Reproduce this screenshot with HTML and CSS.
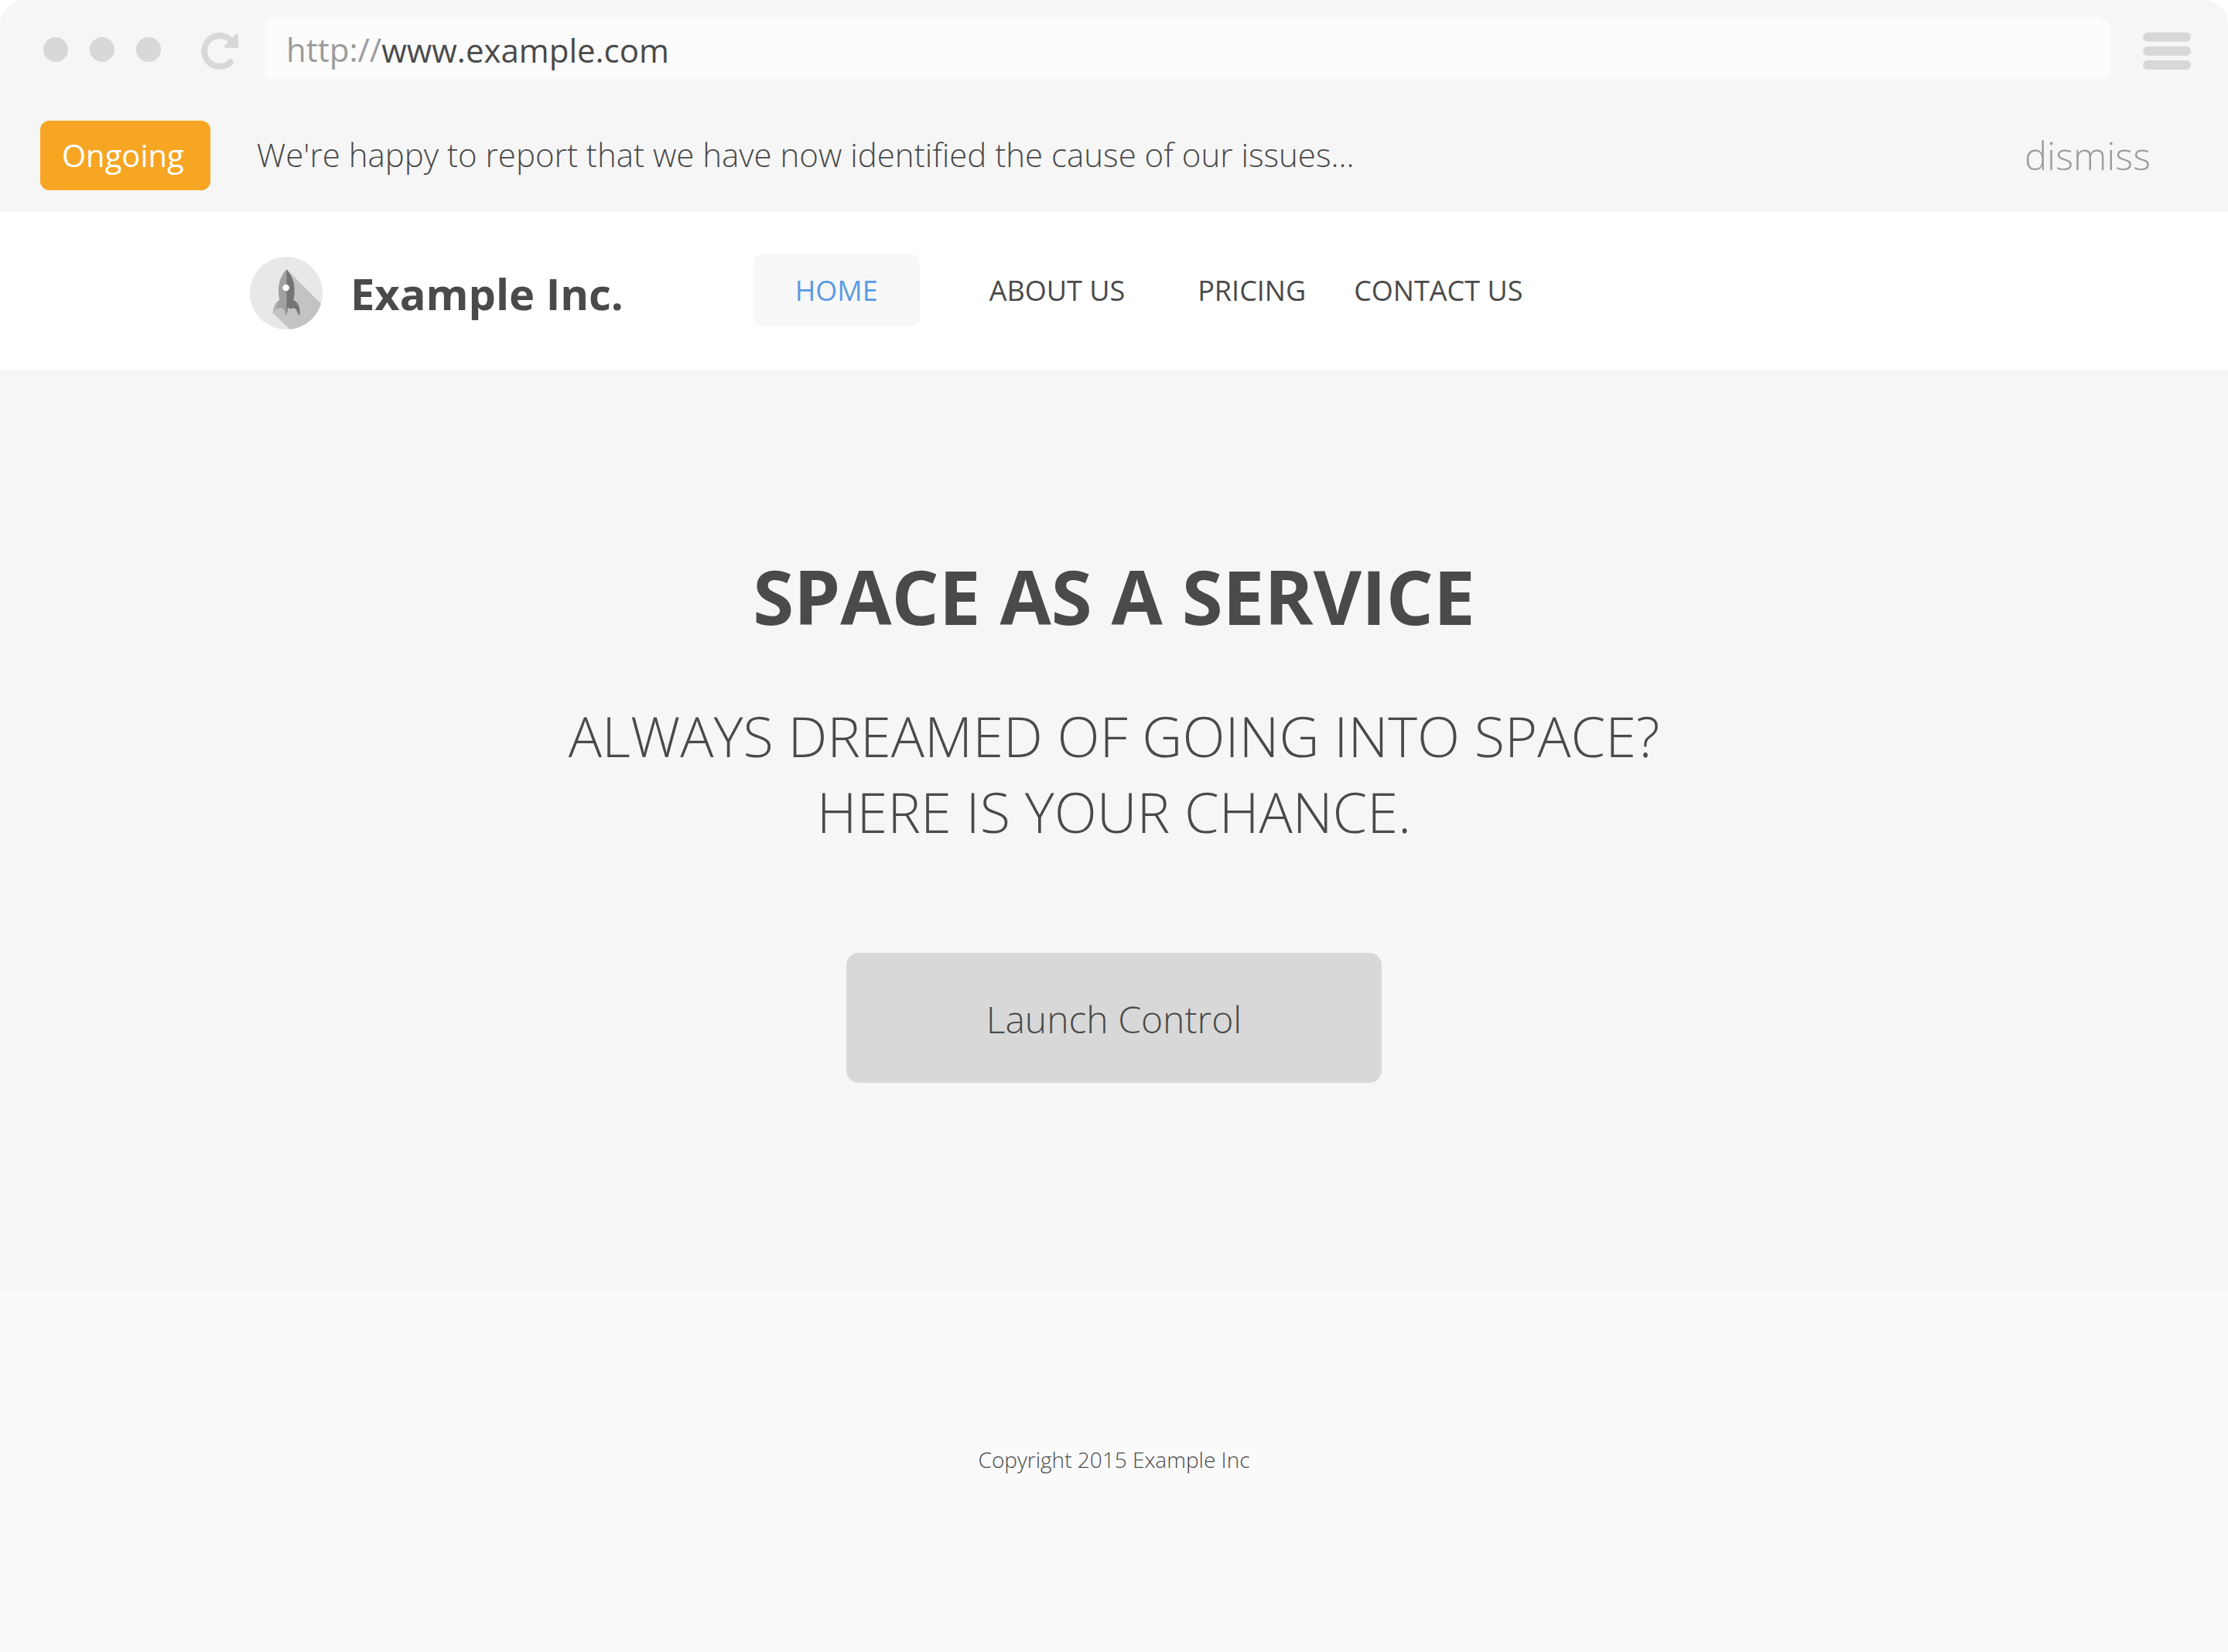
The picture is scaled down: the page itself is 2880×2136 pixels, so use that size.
FILE: index.html
```
<!DOCTYPE html>
<html lang="en">
<head>
<meta charset="utf-8">
<meta name="viewport" content="width=device-width, initial-scale=1">
<title>Example Inc.</title>
<link rel="stylesheet" href="styles.css">
</head>
<body>
<div class="window">
  <div class="chrome">
    <div class="dots"><span class="dot"></span><span class="dot"></span><span class="dot"></span></div>
    <button class="icon-button reload" type="button" aria-label="Reload">
      <svg class="reload-icon" viewBox="128 128 1536 1536" aria-hidden="true"><path d="M1664 256v448q0 26-19 45t-45 19h-448q-42 0-59-40-17-39 14-69l138-138q-148-137-349-137-104 0-198.500 40.500t-163.500 109.500-109.500 163.500-40.500 198.500 40.500 198.500 109.500 163.500 163.500 109.500 198.500 40.500q119 0 225-52t179-147q7-10 23-12 15 0 25 9l137 138q9 8 9.500 20.500t-7.500 22.500q-109 132-264 204.500t-327 72.500q-156 0-298-61t-245-164-164-245-61-298 61-298 164-245 245-164 298-61q147 0 284.500 55.500t244.500 156.500l130-129q29-31 70-14 39 17 39 59z"/></svg>
    </button>
    <div class="address">
      <label class="scheme" for="url">http://</label>
      <input class="url" id="url" type="text" value="www.example.com">
    </div>
    <button class="icon-button menu" type="button" aria-label="Menu">
      <span class="menu-bar"></span><span class="menu-bar"></span><span class="menu-bar"></span>
    </button>
  </div>

  <div class="banner">
    <span class="badge">Ongoing</span>
    <p class="message">We're happy to report that we have now identified the cause of our issues...</p>
    <button class="dismiss" type="button">dismiss</button>
  </div>

  <header class="header">
    <a class="brand" href="#">
      <svg class="logo" viewBox="69 66 282 282" aria-hidden="true">
        <defs><clipPath id="disc"><circle cx="210" cy="207" r="141"/></clipPath></defs>
        <circle cx="210" cy="207" r="141" fill="#e8e8e8"/>
        <path clip-path="url(#disc)" d="M212 115L380 283L300 420L160 286L190 250z" fill="#c3c3c3"/>
        <path d="M211 115C190 138 180 165 180 198Q180 218 184 234C170 242 160 256 158 288C168 272 176 265 188 264Q202 265 208 290L211 290z" fill="#a0a0a0"/>
        <path d="M158 288C160 266 168 252 181 244Q172 262 168 272Q162 278 158 288z" fill="#b8b8b8"/>
        <path d="M211 115C232 138 242 165 242 198Q242 218 238 234C254 242 264 256 263 290L256 290C252 274 246 266 238 264Q230 270 216 264Q216 280 211 290z" fill="#747474"/>
        <circle cx="209" cy="186" r="13" fill="#fff"/>
      </svg>
      <span class="brand-name">Example Inc.</span>
    </a>
    <nav class="nav">
      <a class="nav-link nav-link-active" href="#">HOME</a>
      <a class="nav-link nav-link-about" href="#">ABOUT US</a>
      <a class="nav-link nav-link-pricing" href="#">PRICING</a>
      <a class="nav-link" href="#">CONTACT US</a>
    </nav>
  </header>

  <main class="hero">
    <h1 class="title">SPACE AS A SERVICE</h1>
    <p class="subtitle">ALWAYS DREAMED OF GOING INTO SPACE?<br>HERE IS YOUR CHANCE.</p>
    <button class="launch" type="button">Launch Control</button>
  </main>

  <footer class="footer">Copyright 2015 Example Inc</footer>
</div>
</body>
</html>
```
FILE: styles.css
```
* { box-sizing: border-box; }

body {
  margin: 0;
  background: #fff;
  color: #4a4a4a;
  font-family: "Open Sans", "Liberation Sans", sans-serif;
}

button, input { font: inherit; color: inherit; border: 0; padding: 0; background: none; }
a { color: inherit; text-decoration: none; }
h1, p { margin: 0; }

.window {
  display: flex;
  flex-direction: column;
  min-height: 100vh;
  overflow: hidden;
  border-radius: 32px 32px 0 0;
  background: #fafafa;
}

/* Browser toolbar */
.chrome {
  display: flex;
  align-items: center;
  height: 128px;
  padding: 0 48px 0 56px;
  background: #f6f6f6;
}
.dots { display: flex; gap: 28px; }
.dot { width: 32px; height: 32px; border-radius: 50%; background: #d8d8d8; }
.icon-button { flex: none; padding-top: 4px; }
.reload { margin: 0 34px 0 52px; }
.reload-icon { display: block; width: 48px; height: 48px; fill: #d8d8d8; }
.address {
  position: relative;
  display: flex;
  flex: 1;
  align-items: center;
  height: 80px;
  margin: 0 42px 4px 0;
  padding: 0 12px 0 4px;
  background: linear-gradient(#fcfcfc, #fcfcfc) content-box;
  font-size: 42px;
  line-height: 58px;
}
.address::before {
  content: "";
  position: absolute;
  inset: 4px 0 0;
  border-radius: 8px;
  background: #fcfcfc;
}
.scheme { position: relative; padding: 4px 0 0 24px; color: #9b9b9b; }
.url { position: relative; flex: 1; min-width: 0; height: 62px; padding-top: 4px; }
.menu { display: flex; flex-direction: column; gap: 6px; }
.menu-bar { width: 62px; height: 12px; border-radius: 6px; background: #d8d8d8; }

/* Status banner */
.banner {
  display: flex;
  align-items: center;
  height: 146px;
  padding: 0 100px 0 52px;
  background: #f6f6f6;
}
.badge {
  padding: 0 34px 0 28px;
  border-radius: 12px;
  background: #f6a623;
  color: #fff;
  font-size: 40px;
  line-height: 90px;
}
.message { flex: 1; padding: 0 0 2px 60px; font-size: 42px; font-weight: 300; line-height: 58px; }
.dismiss { color: #9b9b9b; font-size: 49px; font-weight: 300; line-height: 66px; }

/* Site header */
.header {
  display: flex;
  align-items: center;
  height: 204px;
  padding-left: 323px;
  background: #fff;
}
.brand { display: flex; align-items: center; gap: 36px; margin-right: 168px; padding-top: 6px; }
.logo { width: 94px; height: 94px; }
.brand-name { font-size: 56px; font-weight: 700; line-height: 78px; }
.nav { display: flex; padding-bottom: 2px; font-size: 36px; line-height: 92px; }
.nav-link { padding-top: 2px; white-space: nowrap; }
.nav-link-active { padding: 2px 54px 0; margin-right: 90px; border-radius: 12px; background: #f8f8f8; color: #5c9ae3; }
.nav-link-about { margin-right: 94px; }
.nav-link-pricing { margin-right: 62px; }

/* Hero */
.hero {
  display: flex;
  flex-direction: column;
  align-items: center;
  padding: 244px 48px 268px;
  background: #f6f6f6;
  text-align: center;
}
.title { font-size: 96px; font-weight: 700; line-height: 98px; }
.subtitle { margin: 82px 0 134px; font-size: 72px; font-weight: 300; line-height: 98px; }
.launch {
  width: 692px;
  height: 168px;
  padding-top: 2px;
  border-radius: 16px;
  background: #d8d8d8;
  font-size: 48px;
  font-weight: 300;
}

.footer {
  flex: 1;
  padding: 200px 48px;
  font-size: 28px;
  font-weight: 300;
  line-height: 38px;
  text-align: center;
}
```
